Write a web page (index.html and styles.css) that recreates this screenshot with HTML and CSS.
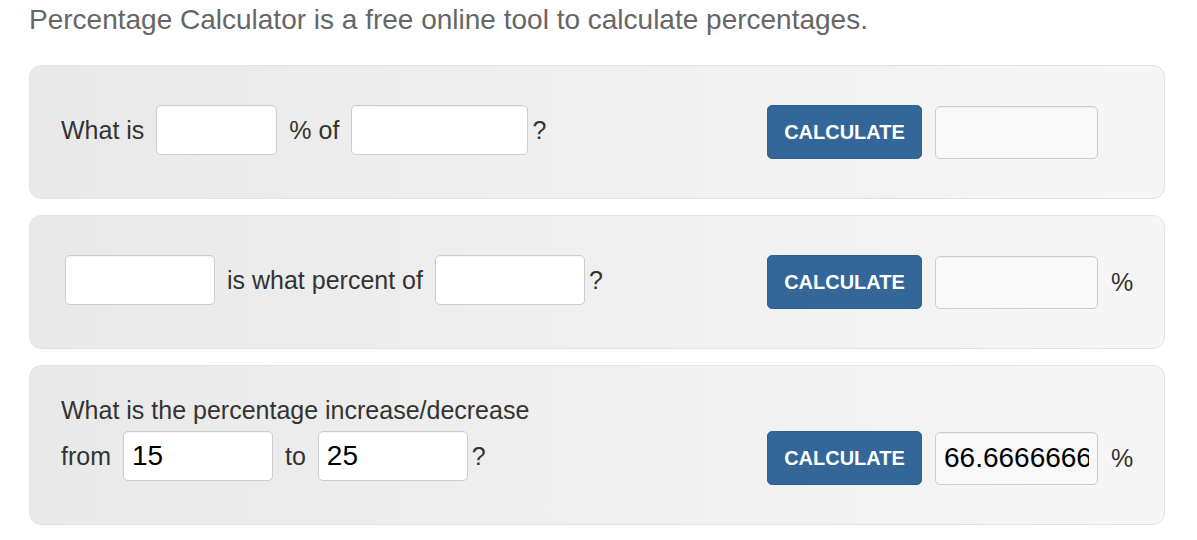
FILE: index.html
```html
<!DOCTYPE html>
<html lang="en">
<head>
<meta charset="utf-8">
<title>Percentage Calculator</title>
<link rel="stylesheet" href="styles.css">
</head>
<body>
<main class="page">
  <h1 class="intro">Percentage Calculator is a free online tool to calculate percentages.</h1>

  <section class="calc">
    <div class="calc-row">
      <span class="lbl">What is</span>
      <input class="field field-sm" type="text">
      <span class="lbl">% of</span>
      <input class="field field-md" type="text">
      <span class="lbl q">?</span>
    </div>
    <div class="calc-action">
      <button class="btn" type="button">Calculate</button>
      <input class="out" type="text" readonly>
    </div>
  </section>

  <section class="calc">
    <div class="calc-row">
      <input class="field field-lg field-first" type="text">
      <span class="lbl">is what percent of</span>
      <input class="field field-lg" type="text">
      <span class="lbl q">?</span>
    </div>
    <div class="calc-action">
      <button class="btn" type="button">Calculate</button>
      <input class="out" type="text" readonly>
      <span class="lbl">%</span>
    </div>
  </section>

  <section class="calc calc-stack">
    <div class="calc-title">What is the percentage increase/decrease</div>
    <div class="calc-row">
      <span class="lbl">from</span>
      <input class="field field-lg" type="text" value="15">
      <span class="lbl">to</span>
      <input class="field field-lg" type="text" value="25">
      <span class="lbl q">?</span>
    </div>
    <div class="calc-action">
      <button class="btn" type="button">Calculate</button>
      <input class="out" type="text" readonly value="66.66666666666667">
      <span class="lbl">%</span>
    </div>
  </section>
</main>
</body>
</html>
```
FILE: styles.css
```css
html, body {
  margin: 0;
  padding: 0;
  background: #fff;
}

body {
  font-family: "Liberation Sans", Arial, sans-serif;
  color: #333;
}

.page {
  padding: 4px 32px 0 29px;
}

.intro {
  margin: 0 0 29px;
  font-size: 28px;
  line-height: 32px;
  font-weight: normal;
  color: #666;
}

.calc {
  display: grid;
  grid-template-columns: 706px 1fr;
  align-items: start;
  padding: 39px 31px;
  margin-bottom: 16px;
  border: 1px solid #e3e3e3;
  border-radius: 12px;
  background: linear-gradient(to right, #e9e9e9, #f6f6f6);
}

.calc-stack {
  padding-top: 30px;
  row-gap: 6px;
}

.calc-stack .calc-title {
  grid-column: 1 / -1;
  grid-row: 1;
}

.calc-stack .calc-row {
  grid-column: 1;
  grid-row: 2;
}

.calc-stack .calc-action {
  grid-column: 2;
  grid-row: 2;
}

.calc-title {
  font-size: 25px;
  line-height: 29px;
  color: #333;
}

.calc-row {
  display: flex;
  align-items: center;
  gap: 12px;
  height: 50px;
}

.lbl {
  font-size: 25px;
  color: #333;
  white-space: nowrap;
}

.q {
  margin-left: -8px;
}

.field,
.out {
  box-sizing: border-box;
  height: 50px;
  padding: 0 8px;
  border: 1px solid #ccc;
  border-radius: 5px;
  background: #fff;
  font-family: "Liberation Sans", Arial, sans-serif;
  font-size: 28px;
  color: #000;
  box-shadow: inset 0 1px 1px rgba(0, 0, 0, 0.04);
  outline: none;
}

.field-sm { width: 121px; }
.field-md { width: 177px; }
.field-lg { width: 150px; }
.field-first { margin-left: 4px; }

.calc-action {
  display: flex;
  align-items: center;
  gap: 13px;
}

.btn {
  box-sizing: border-box;
  width: 155px;
  height: 54px;
  padding: 0;
  border: 1px solid #30608f;
  border-radius: 5px;
  background: #336699;
  color: #fff;
  font-family: "Liberation Sans", Arial, sans-serif;
  font-size: 20px;
  font-weight: bold;
  text-transform: uppercase;
  cursor: pointer;
}

.out {
  width: 163px;
  height: 53px;
  background: #f8f8f8;
}
```
